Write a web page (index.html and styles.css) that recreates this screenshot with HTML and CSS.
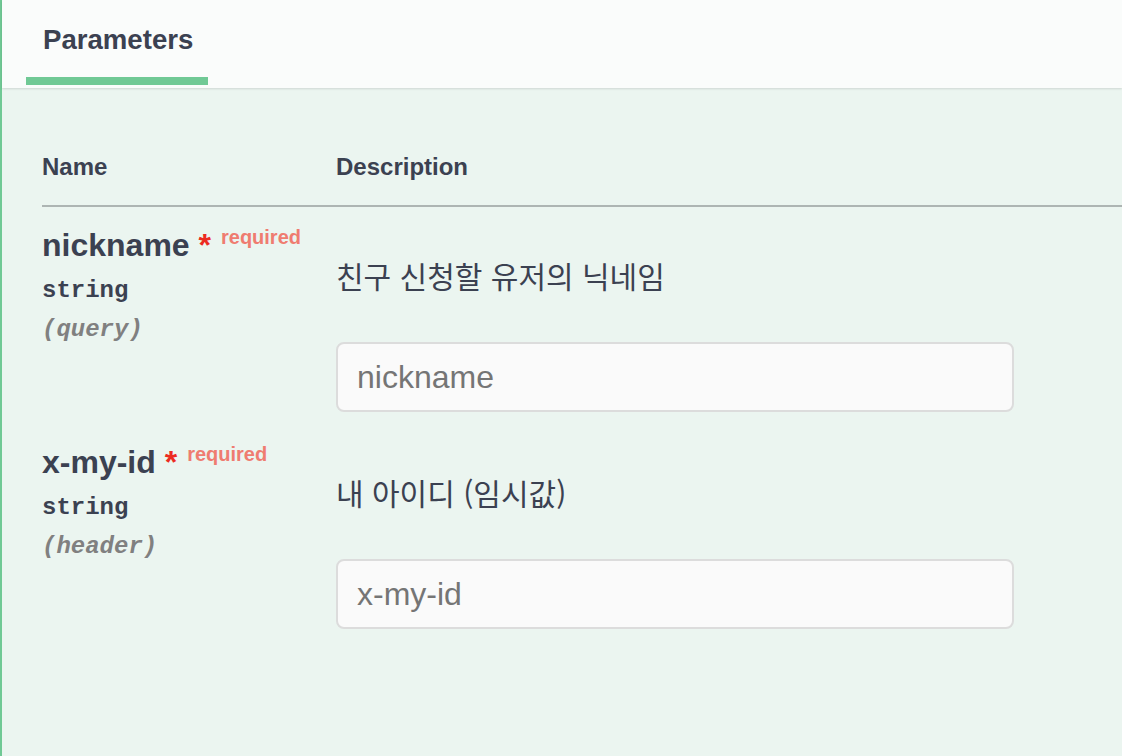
FILE: index.html
```html
<!DOCTYPE html>
<html lang="ko">
<head>
<meta charset="utf-8">
<title>Parameters</title>
<link rel="stylesheet" href="styles.css">
</head>
<body>
<div class="opblock">
  <div class="section-header">
    <div class="tab"><span class="tab-label">Parameters</span></div>
  </div>
  <div class="params">
    <div class="params-head">
      <div class="col-name">Name</div>
      <div class="col-desc">Description</div>
    </div>
    <div class="param-row">
      <div class="col-name">
        <div class="param-name">nickname<span class="star">&nbsp;*</span><span class="req">required</span></div>
        <div class="param-type">string</div>
        <div class="param-in">(query)</div>
      </div>
      <div class="col-desc">
        <p class="desc">친구 신청할 유저의 닉네임</p>
        <input type="text" class="text-input" placeholder="nickname">
      </div>
    </div>
    <div class="param-row">
      <div class="col-name">
        <div class="param-name">x-my-id<span class="star">&nbsp;*</span><span class="req">required</span></div>
        <div class="param-type">string</div>
        <div class="param-in">(header)</div>
      </div>
      <div class="col-desc">
        <p class="desc">내 아이디 (임시값)</p>
        <input type="text" class="text-input" placeholder="x-my-id">
      </div>
    </div>
  </div>
</div>
</body>
</html>
```
FILE: styles.css
```css
html, body {
  margin: 0;
  padding: 0;
}

body {
  background: #ebf5f0;
  font-family: "Liberation Sans", Arial, sans-serif;
  color: #3b4151;
}

.opblock {
  border-left: 2px solid #70c995;
  min-height: 756px;
  box-sizing: border-box;
  background: #ebf5f0;
}

.section-header {
  height: 88px;
  box-sizing: border-box;
  padding: 24px 0 0 24px;
  background: #fafcfb;
  box-shadow: 0 1px 2px rgba(0, 0, 0, 0.12);
  position: relative;
}

.tab {
  display: inline-flex;
  flex-direction: column;
}

.tab-label {
  font-size: 27.6px;
  font-weight: 700;
  line-height: 32px;
  padding: 0 15px 0 17px;
  color: #3b4151;
}

.tab::after {
  content: "";
  display: block;
  height: 8px;
  margin-top: 21px;
  background: #70c995;
}

.params {
  padding: 65px 0 0 40px;
}

.params-head {
  display: flex;
  border-bottom: 2px solid #adb5b3;
  padding-bottom: 24px;
  font-size: 24px;
  font-weight: 700;
  line-height: 28px;
}

.col-name {
  width: 294px;
  flex: none;
}

.col-desc {
  flex: 1;
  min-width: 0;
}

.param-row {
  display: flex;
  padding-top: 20px;
}

.param-name {
  font-size: 32px;
  font-weight: 700;
  line-height: 37px;
  white-space: nowrap;
}

.star {
  color: #ec2b22;
}

.req {
  font-size: 20px;
  font-weight: 700;
  color: #ef7c70;
  padding: 0 10px;
  position: relative;
  top: -12px;
}

.param-type {
  font-family: "Liberation Mono", "Courier New", monospace;
  font-size: 24px;
  font-weight: 700;
  line-height: 27px;
  margin-top: 9px;
}

.param-in {
  font-family: "Liberation Mono", "Courier New", monospace;
  font-size: 24px;
  font-weight: 700;
  font-style: italic;
  color: #808080;
  line-height: 27px;
  margin-top: 12px;
}

.desc {
  margin: 28px 0 0;
  font-family: "Noto Sans CJK KR", "Liberation Sans", sans-serif;
  font-size: 30px;
  line-height: 40px;
  font-weight: 400;
  color: #3b4151;
}

.text-input {
  display: block;
  box-sizing: border-box;
  width: 678px;
  height: 70px;
  margin: 47px 0 12px;
  padding: 0 19px;
  border: 2px solid #dcdcdc;
  border-radius: 8px;
  background: #fafafa;
  font-family: "Liberation Sans", Arial, sans-serif;
  font-size: 32px;
  color: #3b4151;
  outline: none;
}

.text-input::placeholder {
  color: #757575;
}
```
